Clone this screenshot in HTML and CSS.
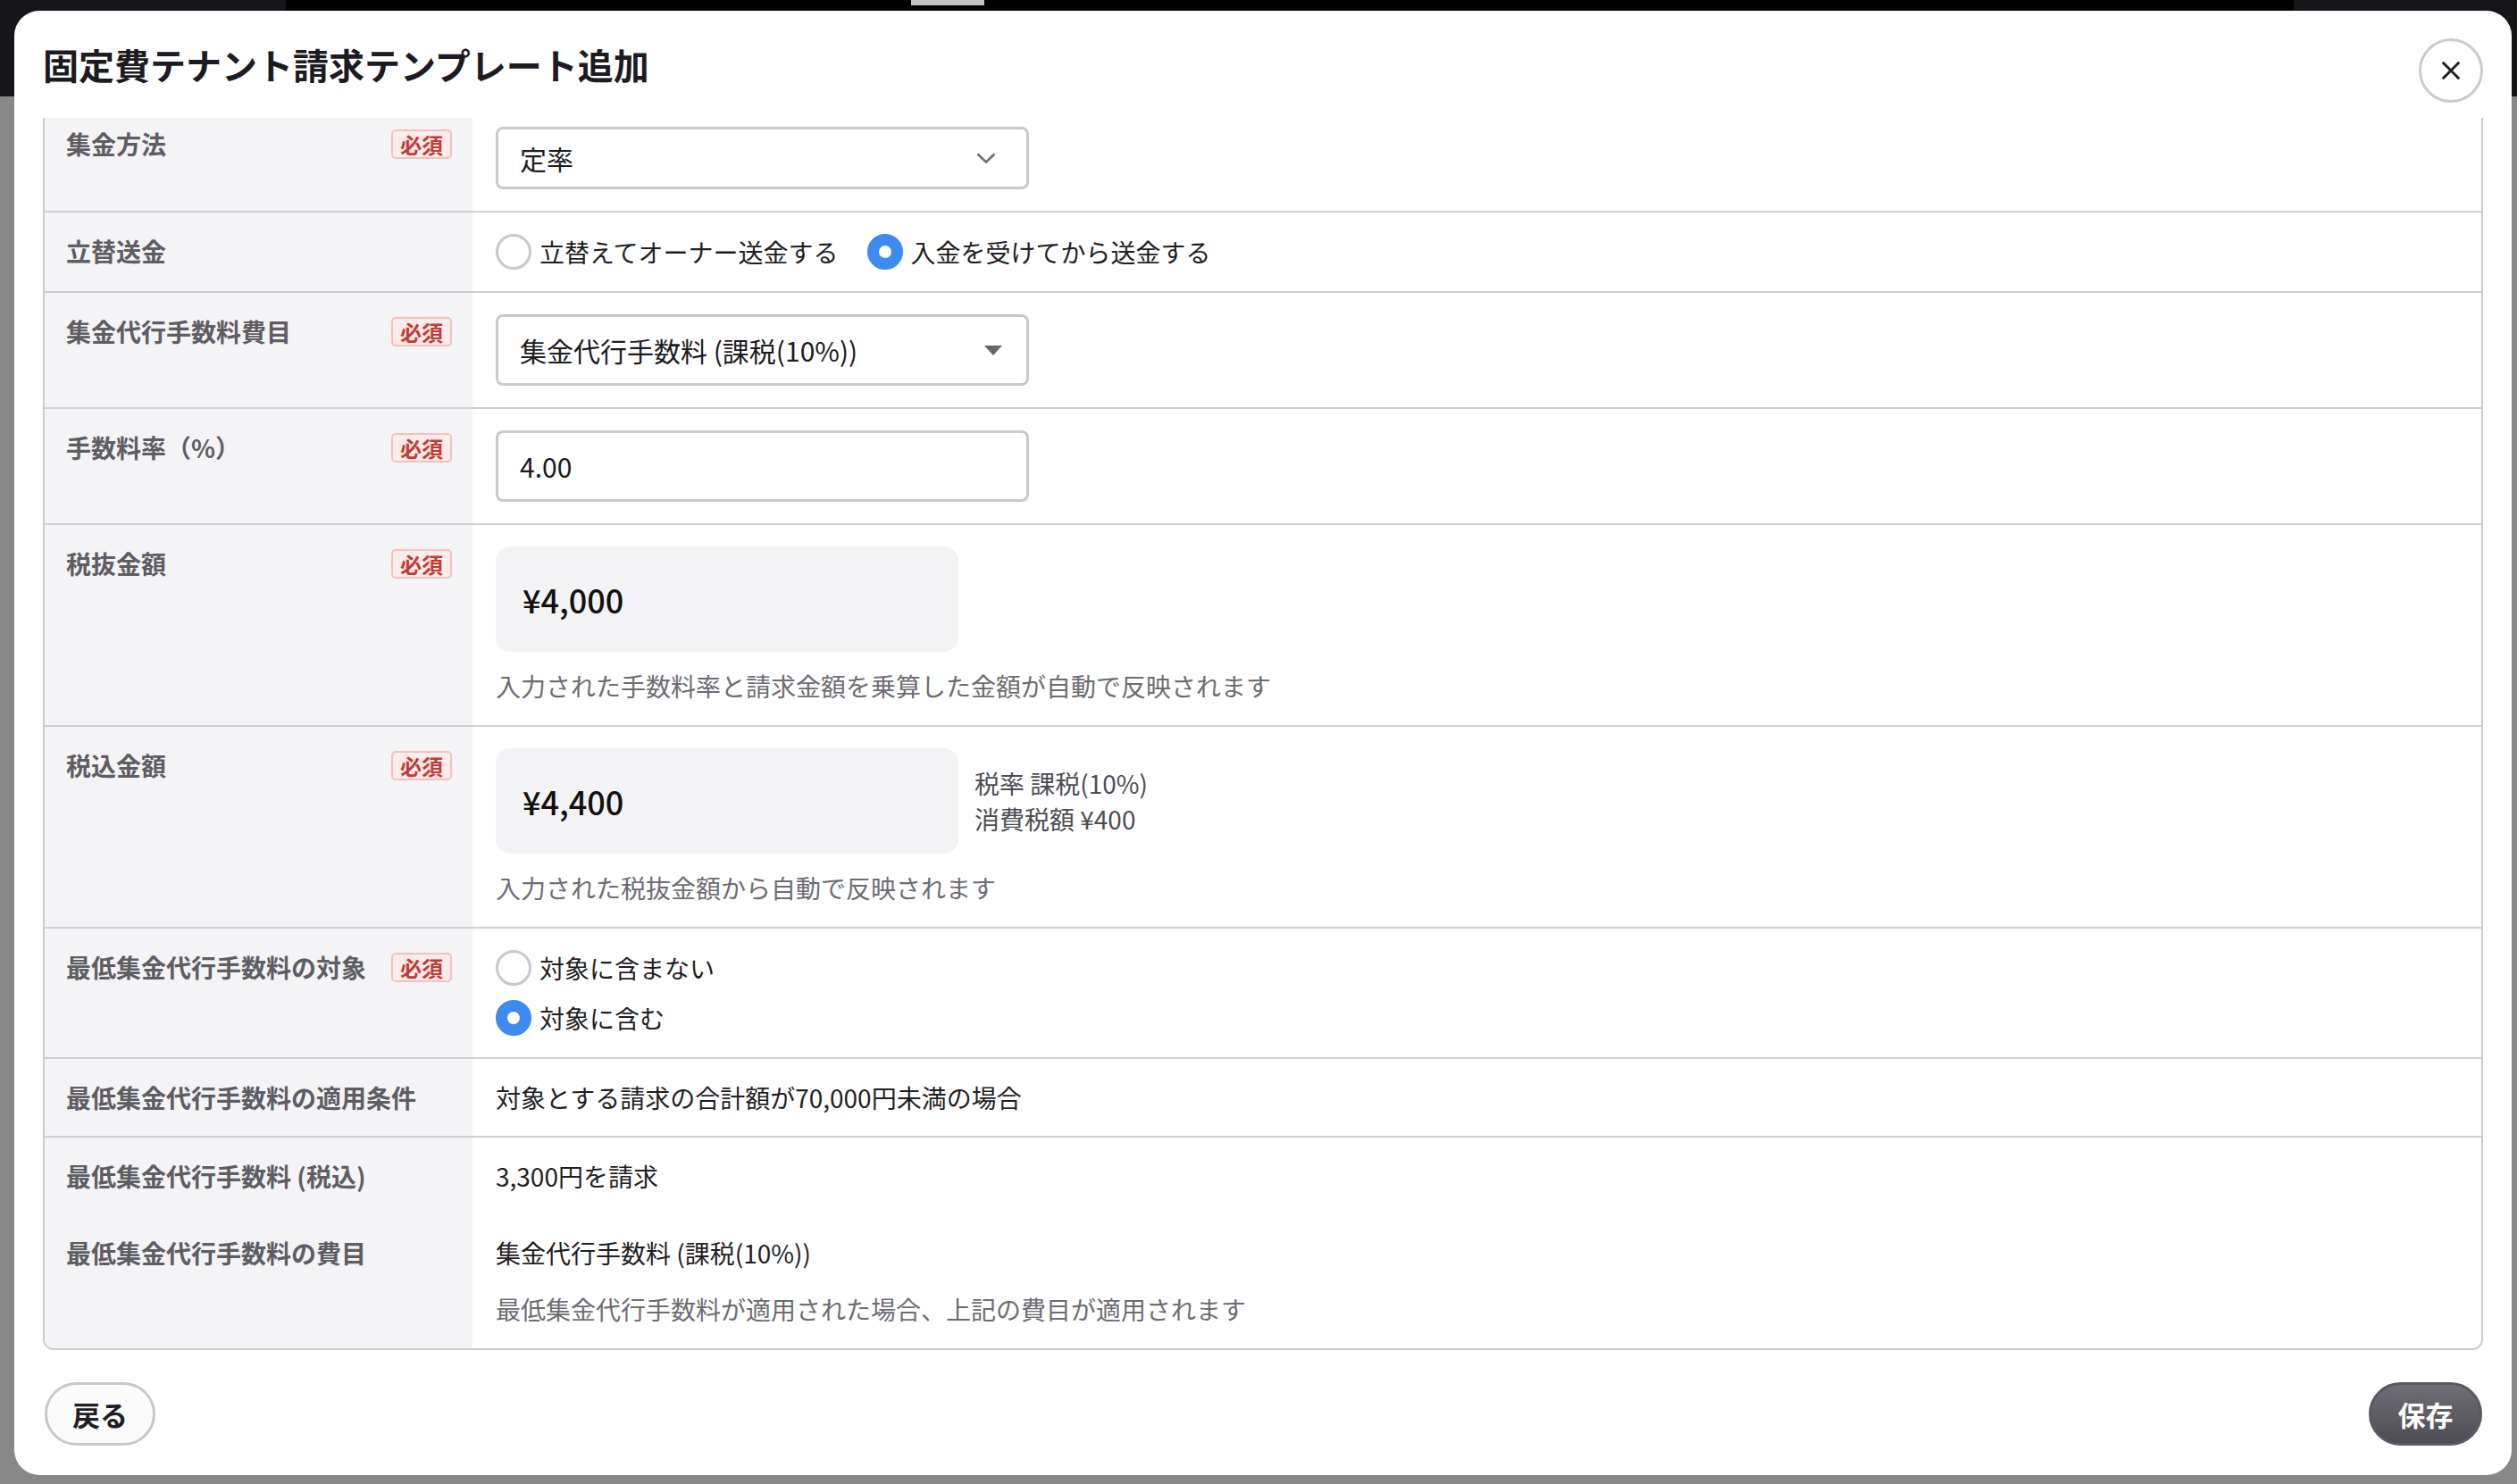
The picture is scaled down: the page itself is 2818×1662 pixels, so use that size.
FILE: index.html
```html
<!DOCTYPE html>
<html lang="ja">
<head>
<meta charset="UTF-8" />
<meta name="viewport" content="width=device-width, initial-scale=1" />
<title>固定費テナント請求テンプレート追加</title>
<link rel="stylesheet" href="styles.css">
</head>
<body>
  <section class="modal" role="dialog" aria-labelledby="modalTitle">
    <header class="modal-header">
      <h1 id="modalTitle">固定費テナント請求テンプレート追加</h1>
      <button class="close-btn" type="button" aria-label="閉じる">
        <svg viewBox="0 0 26 26" aria-hidden="true"><path d="M3 3L23 23M23 3L3 23"/></svg>
      </button>
    </header>

    <div class="modal-body">
      <div class="form-table">

        <div class="row">
          <div class="label-cell"><span>集金方法</span><span class="required">必須</span></div>
          <div class="field-cell">
            <div class="select">
              <span>定率</span>
              <svg class="chevron" viewBox="0 0 22 12" aria-hidden="true"><path d="M1.5 1.5L11 10.5L20.5 1.5"/></svg>
            </div>
          </div>
        </div>

        <div class="row">
          <div class="label-cell"><span>立替送金</span></div>
          <div class="field-cell">
            <div class="radio-group">
              <label class="radio-option"><span class="radio"></span>立替えてオーナー送金する</label>
              <label class="radio-option"><span class="radio checked"></span>入金を受けてから送金する</label>
            </div>
          </div>
        </div>

        <div class="row">
          <div class="label-cell"><span>集金代行手数料費目</span><span class="required">必須</span></div>
          <div class="field-cell">
            <div class="select select-lg">
              <span>集金代行手数料 (課税(10%))</span>
              <span class="caret"></span>
            </div>
          </div>
        </div>

        <div class="row">
          <div class="label-cell"><span>手数料率（%）</span><span class="required">必須</span></div>
          <div class="field-cell">
            <div class="text-input">4.00</div>
          </div>
        </div>

        <div class="row">
          <div class="label-cell"><span>税抜金額</span><span class="required">必須</span></div>
          <div class="field-cell">
            <div class="amount-line">
              <div class="amount-box">¥4,000</div>
            </div>
            <p class="hint">入力された手数料率と請求金額を乗算した金額が自動で反映されます</p>
          </div>
        </div>

        <div class="row">
          <div class="label-cell"><span>税込金額</span><span class="required">必須</span></div>
          <div class="field-cell">
            <div class="amount-line">
              <div class="amount-box">¥4,400</div>
              <div class="tax-info">
                <div>税率 課税(10%)</div>
                <div>消費税額 ¥400</div>
              </div>
            </div>
            <p class="hint">入力された税抜金額から自動で反映されます</p>
          </div>
        </div>

        <div class="row">
          <div class="label-cell"><span>最低集金代行手数料の対象</span><span class="required">必須</span></div>
          <div class="field-cell">
            <div class="radio-group stacked">
              <label class="radio-option"><span class="radio"></span>対象に含まない</label>
              <label class="radio-option"><span class="radio checked"></span>対象に含む</label>
            </div>
          </div>
        </div>

        <div class="row">
          <div class="label-cell"><span>最低集金代行手数料の適用条件</span></div>
          <div class="field-cell"><p class="value">対象とする請求の合計額が70,000円未満の場合</p></div>
        </div>

        <div class="row no-border">
          <div class="label-cell"><span>最低集金代行手数料 (税込)</span></div>
          <div class="field-cell"><p class="value">3,300円を請求</p></div>
        </div>

        <div class="row last">
          <div class="label-cell"><span>最低集金代行手数料の費目</span></div>
          <div class="field-cell">
            <p class="value">集金代行手数料 (課税(10%))</p>
            <p class="hint hint-spaced">最低集金代行手数料が適用された場合、上記の費目が適用されます</p>
          </div>
        </div>

      </div>
    </div>

    <footer class="modal-footer">
      <button class="btn btn-back" type="button">戻る</button>
      <button class="btn btn-save" type="button">保存</button>
    </footer>
  </section>
</body>
</html>
```

FILE: styles.css
```css
/* Reset & base */
*, *::before, *::after {
  box-sizing: border-box;
}

html, body {
  height: 100%;
}

body {
  margin: 0;
  padding: 12px 6px 10px 16px;
  font-family: "Noto Sans CJK JP", "Noto Sans", sans-serif;
  color: #1f1e24;
  /* page behind the dialog, dimmed */
  background:
    linear-gradient(#c4c4c6, #c4c4c6) 1020px 0 / 82px 6px no-repeat,
    linear-gradient(#000, #000) 320px 0 / 2248px 12px no-repeat,
    linear-gradient(#16151a 0 108px, #888 108px);
}

p {
  margin: 0;
}

/* Dialog */
.modal {
  height: 1640px;
  background: #fff;
  border-radius: 28px;
  display: flex;
  flex-direction: column;
  overflow: hidden;
}

.modal-header {
  height: 120px;
  flex: none;
  display: flex;
  justify-content: space-between;
  align-items: center;
  padding: 0 32px 0 32px;
}

h1 {
  margin: 0;
  font-size: 40px;
  line-height: 52px;
  font-weight: 700;
  color: #1c1b21;
}

.close-btn {
  width: 72px;
  height: 72px;
  margin-top: 14px;
  border: 3px solid #cbcacf;
  border-radius: 50%;
  background: #fff;
  display: flex;
  align-items: center;
  justify-content: center;
  padding: 0;
  cursor: pointer;
}

.close-btn svg {
  width: 24px;
  height: 24px;
  stroke: #1f1e24;
  stroke-width: 3.2;
  fill: none;
}

.modal-body {
  flex: 1;
  overflow: hidden;
  padding: 0 32px;
}

/* Form table (scrolled a little) */
.form-table {
  margin-top: -16px;
  border: 2px solid #cbcacf;
  border-radius: 0 0 12px 12px;
  overflow: hidden;
}

.row {
  display: grid;
  grid-template-columns: 479px 1fr;
  border-bottom: 2px solid #cfced3;
}

.row.no-border,
.row.last {
  border-bottom: none;
}

.label-cell {
  background: #f4f4f6;
  padding: 24px 23px 24px 24px;
  display: flex;
  justify-content: space-between;
  align-items: flex-start;
  font-size: 28px;
  line-height: 38px;
  font-weight: 700;
  color: #5e5d64;
}

.required {
  margin-top: 3px;
  padding: 0 8px;
  font-size: 24px;
  line-height: 29px;
  font-weight: 700;
  color: #c43a34;
  background: #fdeceb;
  border: 2px solid #f4c0bd;
  border-radius: 5px;
}

.field-cell {
  padding: 24px 26px;
  font-size: 28px;
  line-height: 38px;
}

/* Controls */
.select,
.text-input {
  width: 597px;
  display: flex;
  align-items: center;
  justify-content: space-between;
  border: 3px solid #c9c8ce;
  border-radius: 8px;
  background: #fff;
  font-size: 30px;
  color: #1c1b21;
}

.select {
  height: 70px;
  padding: 0 34px 0 24px;
}

.select-lg {
  height: 80px;
  padding: 0 27px 0 24px;
}

.text-input {
  height: 80px;
  padding: 0 24px;
}

.chevron {
  width: 22px;
  height: 12px;
  fill: none;
  stroke: #6f6e76;
  stroke-width: 2.6;
}

.caret {
  width: 0;
  height: 0;
  border-left: 10px solid transparent;
  border-right: 10px solid transparent;
  border-top: 11px solid #666;
}

.radio-group {
  display: flex;
  gap: 32px;
}

.radio-group.stacked {
  flex-direction: column;
  gap: 16px;
}

.radio-option {
  display: flex;
  align-items: center;
  gap: 9px;
  height: 40px;
  font-size: 28px;
  color: #1f1e24;
}

.radio {
  width: 40px;
  height: 40px;
  border-radius: 50%;
  border: 3px solid #c9c8ce;
  background: #fff;
  flex: none;
}

.radio.checked {
  border: 13px solid #3d8af0;
}

.amount-line {
  display: flex;
  align-items: center;
  gap: 18px;
}

.amount-box {
  width: 518px;
  height: 118px;
  display: flex;
  align-items: center;
  padding: 0 30px;
  background: #f3f3f5;
  border-radius: 16px;
  font-size: 36px;
  font-weight: 500;
  color: #111;
}

.tax-info {
  font-size: 28px;
  line-height: 40px;
  color: #4d4c53;
}

.hint {
  margin-top: 18px;
  font-size: 28px;
  line-height: 40px;
  color: #6d6c72;
}

.hint-spaced {
  margin-top: 24px;
}

.value {
  color: #1f1e24;
}

/* Footer */
.modal-footer {
  flex: none;
  display: flex;
  justify-content: space-between;
  padding: 35px 33px 33px 34px;
}

.btn {
  height: 71px;
  border-radius: 36px;
  font-family: inherit;
  font-size: 31px;
  font-weight: 700;
  cursor: pointer;
}

.btn-back {
  width: 124px;
  background: #fbfbfc;
  border: 3px solid #c8c7cd;
  color: #1f1e24;
}

.btn-save {
  width: 127px;
  background: linear-gradient(#6f6d75, #4d4b54);
  border: 3px solid #5a5860;
  color: #fff;
}
```
